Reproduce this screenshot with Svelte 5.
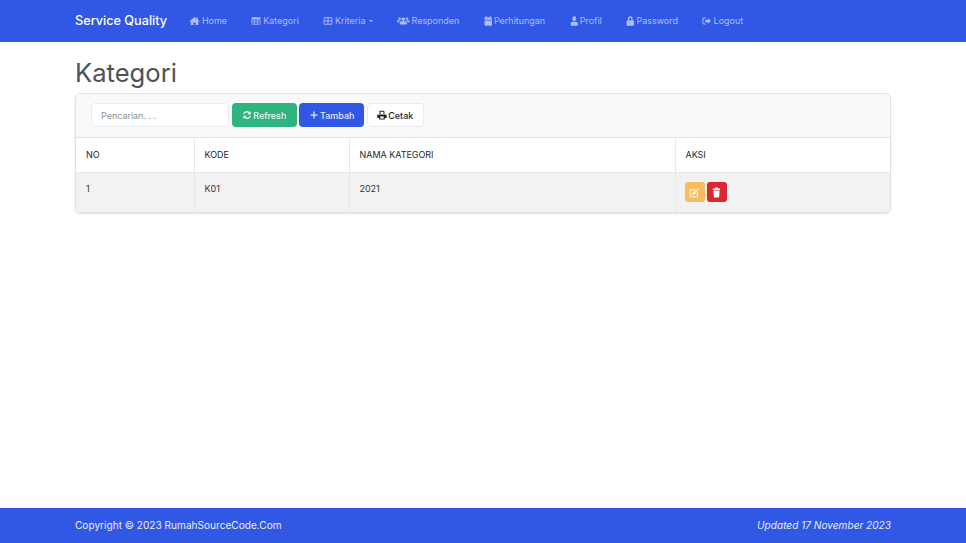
<script>
  const sym = {
    home: 'M8 1.500 0.500 8.200l.9 1L2.500 8.300V14.500h4V10.500h3v4h4V8.300l1.100.9.9-1L13 6V2.500h-2v1.700z',
    table: 'M1 2h14v12H1zM2 5.500v2.200h3.300V5.500zM6.300 5.500v2.200h3.400V5.500zM10.700 5.500v2.200H14V5.500zM2 8.700v2h3.300v-2zM6.300 8.700v2h3.400v-2zM10.700 8.700v2H14v-2zM2 11.700V13h3.300v-1.300zM6.300 11.700V13h3.400v-1.300zM10.700 11.700V13H14v-1.300z',
    grid: 'M2 2h12a1 1 0 0 1 1 1v10a1 1 0 0 1-1 1H2a1 1 0 0 1-1-1V3a1 1 0 0 1 1-1zM2.300 3.700v3.600h5V3.700zM8.700 3.700v3.600h5V3.700zM2.300 8.700v3.600h5V8.700zM8.700 8.700v3.600h5V8.700z',
    users: 'M8 2.500a2.600 2.600 0 1 1 0 5.200 2.600 2.600 0 0 1 0-5.200zM3.200 2.500a1.800 1.800 0 1 1 0 3.600 1.800 1.800 0 0 1 0-3.600zM12.800 2.500a1.800 1.800 0 1 1 0 3.600 1.800 1.800 0 0 1 0-3.600zM0 10V8.300C0 7.400.7 6.800 1.600 6.800h1.600c.4 0 .7.1 1 .4-1 .6-1.500 1.600-1.600 2.800zM16 10V8.300c0-.9-.7-1.500-1.600-1.500h-1.600c-.4 0-.7.1-1 .4 1 .6 1.500 1.600 1.600 2.800zM5.600 8.500h4.800c1.200 0 2.200 1 2.200 2.200v2.800H3.400v-2.800c0-1.200 1-2.200 2.200-2.200z',
    calendar: 'M3 .5h2.500v2h5v-2H13v2h1a1 1 0 0 1 1 1V6H1V3.500a1 1 0 0 1 1-1h1zM1 7h14v7.500a1 1 0 0 1-1 1H2a1 1 0 0 1-1-1z',
    user: 'M8 .5a3.700 3.700 0 1 1 0 7.400A3.700 3.700 0 0 1 8 .5zM4.500 9h7c1.800 0 3.300 1.500 3.300 3.300v2a1.200 1.200 0 0 1-1.200 1.200H2.400a1.200 1.200 0 0 1-1.200-1.200v-2C1.200 10.500 2.700 9 4.500 9z',
    lock: 'M3.500 7V4.800a4.500 4.500 0 0 1 9 0V7h1a1.500 1.500 0 0 1 1.500 1.500v5.500a1.500 1.500 0 0 1-1.500 1.500h-11A1.500 1.500 0 0 1 1 14V8.500A1.500 1.500 0 0 1 2.500 7zM6 7h4V4.800a2 2 0 0 0-4 0z',
    logout: 'M6 2.500v1.500H3.200a.8.8 0 0 0-.8.8v6.400c0 .4.400.8.8.8H6v1.500H3a2.300 2.300 0 0 1-2.300-2.300V4.800A2.300 2.300 0 0 1 3 2.500zM10 3.500 15.200 8 10 12.500V10H5.500V6H10z',
    refresh: 'M14 1.500v5.500H8.500l2.100-2.100A4.300 4.300 0 0 0 3.900 6.500H1.700A6.300 6.300 0 0 1 12.100 3.400zM2 14.500V9h5.500l-2.100 2.100a4.300 4.300 0 0 0 6.700-1.600h2.200A6.300 6.300 0 0 1 3.900 12.600z',
    print: 'M4 1h6.500L12 2.500v4h-1.700V2.700H5.700v3.800H4zM2.200 7h11.600A1.700 1.700 0 0 1 15.500 8.700v4h-3V15h-9v-2.300h-3v-4A1.700 1.700 0 0 1 2.200 7zM5.200 10.500v2.900h5.600v-2.900z',
    edit: 'M12.600 1l2.400 2.400-1.300 1.300-2.400-2.400zM10.400 3.200l2.400 2.400-5.900 5.900H4.500V9.100zM2.800 3H9.200L7.600 4.600H3.300a.7.7 0 0 0-.7.7v7.400c0 .4.300.7.700.7h7.400c.4 0 .7-.3.700-.7V8.500L13 7v6.100a1.900 1.900 0 0 1-1.900 1.900H2.900A1.900 1.900 0 0 1 1 13.100V4.800A1.800 1.800 0 0 1 2.800 3z',
    trash: 'M5.700.8h4.600l.7 1.500h3.500v2h-13v-2H5zM2.500 5.200h11L12.800 14a1.300 1.300 0 0 1-1.300 1.200h-7A1.300 1.300 0 0 1 3.200 14z'
  };
  const menu = [
    ['home', 'Home'], ['table', 'Kategori'], ['grid', 'Kriteria', true], ['users', 'Responden'],
    ['calendar', 'Perhitungan'], ['user', 'Profil'], ['lock', 'Password'], ['logout', 'Logout']
  ];
</script>

{#snippet icon(name)}
  <svg class="ico {name}" viewBox="0 0 16 16" preserveAspectRatio="none" aria-hidden="true"><path fill-rule="evenodd" d={sym[name]} /></svg>
{/snippet}

<div class="page">
  <nav class="navbar">
    <div class="wrap nav-in">
      <a class="brand" href="#top">Service Quality</a>
      <ul class="menu">
        {#each menu as [ic, label, caret]}
          <li><a href="#top">{@render icon(ic)}<span>{label}</span>{#if caret}<i class="caret"></i>{/if}</a></li>
        {/each}
      </ul>
    </div>
  </nav>

  <main class="wrap main">
    <h1>Kategori</h1>
    <section class="card">
      <div class="toolbar">
        <input class="search" placeholder="Pencarian. . ." />
        <button class="btn green">{@render icon('refresh')}Refresh</button>
        <button class="btn blue"><svg class="ico" viewBox="0 0 16 16" aria-hidden="true"><path d="M7 2.500h2V7h4.500v2H9v4.500H7V9H2.500V7H7z" /></svg>Tambah</button>
        <button class="btn white">{@render icon('print')}Cetak</button>
      </div>
      <table>
        <colgroup><col class="c1" /><col class="c2" /><col class="c3" /><col /></colgroup>
        <thead>
          <tr><th>NO</th><th>KODE</th><th>NAMA KATEGORI</th><th>AKSI</th></tr>
        </thead>
        <tbody>
          <tr>
            <td>1</td><td>K01</td><td>2021</td>
            <td class="acts">
              <button class="sq yellow" aria-label="Edit">{@render icon('edit')}</button>
              <button class="sq red" aria-label="Hapus">{@render icon('trash')}</button>
            </td>
          </tr>
        </tbody>
      </table>
    </section>
  </main>

  <footer class="footer">
    <div class="wrap foot-in">
      <span>Copyright © 2023 RumahSourceCode.Com</span>
      <em>Updated 17 November 2023</em>
    </div>
  </footer>
</div>

<style>
  :global(body) {
    margin: 0;
    font-family: Inter, "Liberation Sans", sans-serif;
    font-size: 8.960px;
    color: #212529;
    background: #fff;
  }
  .page { min-height: 543px; display: flex; flex-direction: column; }
  .wrap { width: 816px; margin: 0 auto; box-sizing: border-box; }
  .navbar { background: #3158e4; height: 42px; flex: none; }
  .nav-in { display: flex; align-items: center; height: 100%; padding-bottom: 1px; }
  .brand { color: #fff; font-size: 12.680px; font-weight: 500; text-decoration: none; margin-right: 14px; white-space: nowrap; }
  .menu { display: flex; list-style: none; margin: 0; padding: 0; }
  .menu a { display: flex; align-items: center; gap: 1.800px; padding: 0 8px; margin-right: 8.400px; color: rgba(255,255,255,.6); text-decoration: none; font-size: 8.960px; white-space: nowrap; }
  .ico { width: 10px; height: 10px; fill: currentColor; flex: none; }
  .ico.home { width: 11px; }
  .ico.users { width: 12.500px; }
  .ico.calendar, .ico.user, .ico.lock { width: 8.500px; }
  .ico.logout { width: 9.500px; }
  .ico.edit { width: 11px; height: 11px; }
  .ico.trash { width: 9px; height: 11px; }
  .caret { width: 0; height: 0; margin-left: 1.500px; border-left: 2.500px solid transparent; border-right: 2.500px solid transparent; border-top: 2.500px solid currentColor; }
  .main { flex: 1; padding-top: 13px; }
  h1 { margin: 0 0 2px; height: 36px; line-height: 36px; font-size: 25.600px; font-weight: 400; color: #4d5358; }
  .card { border: 1px solid #dfe2e5; border-radius: 5px; box-shadow: 0 1px 2px rgba(0,0,0,.12); overflow: hidden; }
  .toolbar { display: flex; align-items: center; gap: 2.500px; height: 44px; padding: 0 15px 1px; background: #f8f9f9; border-bottom: 1px solid #dfe2e5; box-sizing: border-box; }
  .search { width: 138px; height: 24px; box-sizing: border-box; padding: 0 9px; border: 1px solid #e9ecef; border-radius: 4px; background: #fff; font: inherit; outline: none; }
  .search::placeholder { color: #8a9096; opacity: 1; }
  .btn { display: flex; align-items: center; justify-content: center; gap: 1.500px; height: 24px; padding: 0; border: 1px solid transparent; border-radius: 4px; font: inherit; font-weight: 500; box-sizing: border-box; }
  .green { width: 65px; background: #2fb380; color: #e8f7f1; }
  .blue { width: 65px; background: #3158e4; color: #e6ebfc; }
  .white { width: 57px; background: #fff; color: #212529; border-color: #e9ecef; }
  table { width: 100%; border-collapse: collapse; table-layout: fixed; font-size: 8.960px; }
  .c1 { width: 118px; }
  .c2 { width: 155px; }
  .c3 { width: 326px; }
  th, td { padding: 0 10px; text-align: left; vertical-align: top; font-weight: 400; border-left: 1px solid #e6e8ea; }
  th:first-child, td:first-child { border-left: 0; }
  th { height: 34px; line-height: 34px; border-bottom: 1px solid #e6e8ea; color: #212529; }
  td { height: 39px; padding-top: 10px; line-height: 12px; background: #f2f2f2; color: #33383c; box-sizing: border-box; }
  td.acts { padding-top: 9px; padding-left: 9px; }
  .acts { white-space: nowrap; font-size: 0; }
  .sq { display: inline-flex; align-items: center; justify-content: center; width: 20px; height: 20px; padding: 0; border: 0; border-radius: 3px; margin-right: 2px; vertical-align: top; }
  .yellow { background: #f7bd5e; color: #fff3dd; }
  .red { background: #dc2733; color: #fff; }
  .footer { height: 35px; flex: none; background: #3158e4; color: #e8ecfc; font-size: 10.100px; }
  .foot-in { display: flex; justify-content: space-between; align-items: center; height: 100%; padding-bottom: 1px; }
</style>
